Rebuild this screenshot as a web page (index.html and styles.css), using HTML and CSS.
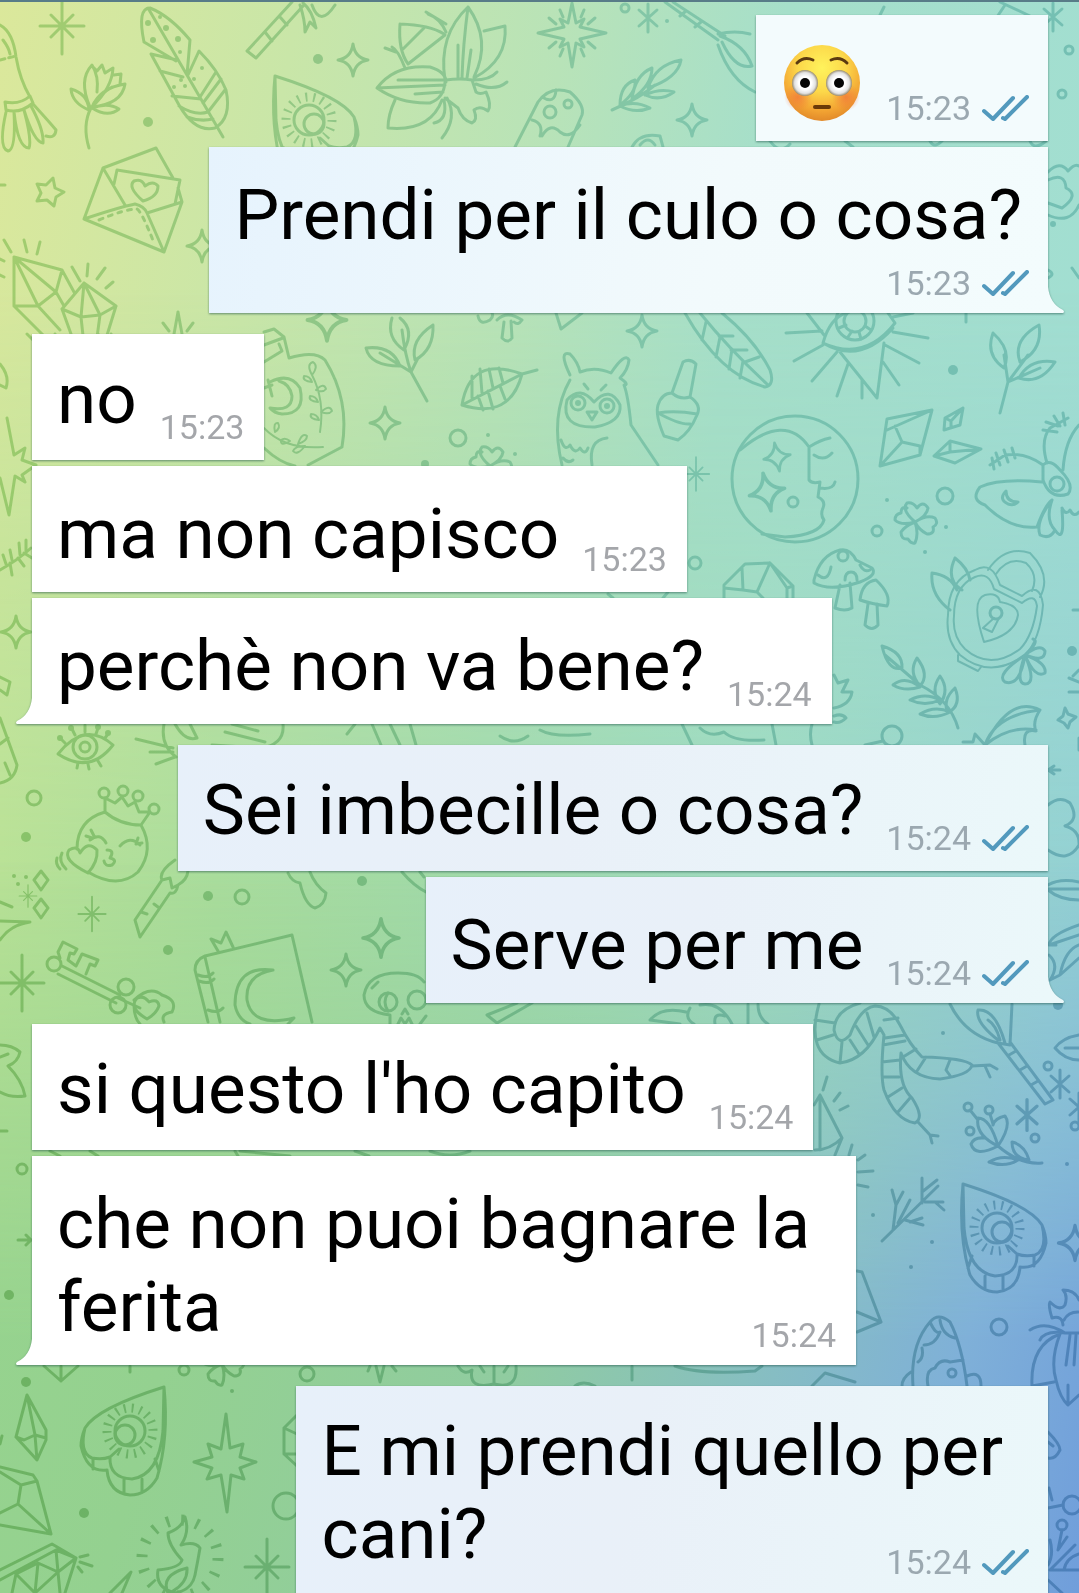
FILE: index.html
```html
<!DOCTYPE html>
<html lang="it">
<head>
<meta charset="utf-8">
<meta name="viewport" content="width=device-width, initial-scale=1">
<title>Chat</title>
<link rel="stylesheet" href="styles.css">
</head>
<body>
<svg class="defs" width="0" height="0" aria-hidden="true">
  <defs>
    <symbol id="read" viewBox="0 0 47 26"><path d="M2 16l9 8L31 3M21 23l2 1L45 2" fill="none" stroke="#5299bd" stroke-width="4" stroke-linecap="round" stroke-linejoin="round"/></symbol>
    <symbol id="tail" viewBox="0 0 16 26"><path d="M0 0Q2 17 15 23Q17 25 15 26H0Z" fill="currentColor"/></symbol>
  </defs>
</svg>

<div class="wallpaper" aria-hidden="true">
<svg class="doodles" viewBox="0 0 1079 1593" preserveAspectRatio="xMinYMin slice">
  <defs>
    <linearGradient id="ink" x1="0" y1="0" x2="1" y2="0">
      <stop offset="0" stop-color="#3c9a14"/><stop offset=".35" stop-color="#2c8c4a"/><stop offset=".6" stop-color="#2c947c"/><stop offset="1" stop-color="#1e867e"/>
    </linearGradient>
    <linearGradient id="inkLow" x1="0" y1="0" x2="1" y2="0">
      <stop offset="0" stop-color="#23780f"/><stop offset=".6" stop-color="#1c7450"/><stop offset="1" stop-color="#06427e"/>
    </linearGradient>
    <linearGradient id="down" x1="0" y1="0" x2="0" y2="1">
      <stop offset=".3" stop-color="#000"/><stop offset=".8" stop-color="#fff"/>
    </linearGradient>
    <mask id="lower" maskUnits="userSpaceOnUse" x="0" y="0" width="1079" height="1593"><rect width="1079" height="1593" fill="url(#down)"/></mask>
    <path id="spark" d="M0-16Q2-2 15 0Q2 2 0 16Q-2 2-15 0Q-2-2 0-16Z"/>
    <path id="burst" d="M0-28V28M-22 0H22M-11-11L11 11M11-11L-11 11"/>
    <path id="aster" d="M0-14V14M-9-8L9 8M9-8L-9 8"/>
    <path id="clover" d="M0 0Q-14-12-8-19Q-2-20 2-14Q8-22 13-14Q12-6 0 0Q12-8 20-4Q24 2 18 5Q20 12 12 12Q4 8 0 0Q4 12 0 21Q-4 22-7 17Q-14 18-14 10Q-10 4 0 0Q-14 4-20-2Q-20-8-14-9Q-14-16-8-14M0 0"/>
    <g id="planchette">
      <path d="M323 184Q390 205 402 225Q408 250 395 255Q385 257 377 254Q378 275 355 276Q328 272 324 228ZM323 184Q318 235 330 275Q340 292 357 292Q378 290 380 267Q400 270 406 243Q406 235 402 225M345 276v13M363 276v13M394 256v10M332 256l-4 12M377 254l-9-8"/>
      <circle cx="357" cy="228" r="15"/><circle cx="362" cy="232" r="10"/>
      <circle cx="357" cy="228" r="23" stroke-width="9" stroke-dasharray="2 6" stroke-linecap="butt"/>
    </g>
    <mask id="lines" maskUnits="userSpaceOnUse" x="0" y="0" width="1079" height="1593">
      <g fill="none" stroke="#fff" stroke-width="3" stroke-linecap="round" stroke-linejoin="round">
        <!-- top left: broom, tulip, feather -->
        <path d="M0 25Q13 32 16 57Q20 80 30 97M5 102Q20 105 30 96L33 103Q20 114 6 110ZM6 112Q-2 148 8 151Q16 150 14 112M14 112Q18 148 29 148Q32 140 24 110M24 110Q34 142 43 143Q44 130 31 106M33 104Q52 125 56 130Q55 139 46 136M3 40Q9 48 10 54"/>
        <path d="M0 60l16-4" stroke-dasharray="5 4"/>
        <path d="M89 148Q82 125 91 108Q100 94 112 87M90 107Q78 80 92 65Q99 76 97 92M92 66l5 5 5-6 3 8 8-5Q112 88 92 107M114 75l7-1-1 10M125 84Q122 104 92 107Q100 88 125 84ZM71 89Q72 103 89 110Q88 94 71 89ZM92 108Q108 102 119 109Q108 118 92 108Z"/>
        <path d="M144 42Q137 8 150 8Q170 16 190 40L187 75M144 42L176 61M148 8L223 137M151 54L179 105Q195 133 215 128Q232 118 226 90Q218 70 199 51L188 75M151 54L177 60M160 71L183 77M172 96L201 99M179 106Q195 116 208 112M187 117Q200 122 213 119M221 79L203 103M225 90L208 112M216 72L200 97"/>
        <path d="M247 51L292 2M256 58L303 6M247 51l9 7M265 32l7 9M280 17l7 8M300 5Q305 20 305 32L310 22L316 28Q312 10 303 3M312 5Q320 28 335 5"/>
        <use href="#burst" x="62" y="26"/><use href="#spark" x="353" y="60"/>
        <use href="#planchette" x="-48" y="-108"/>
        <!-- lily -->
        <path d="M445 80Q438 35 468 7Q492 40 474 77M468 7Q463 45 462 78M458 45v32M471 50L467 78M484 31L505 26Q508 60 474 78M400 24Q430 25 444 34M400 24Q398 50 408 64M402 50L424 28M408 64L445 35M377 88Q395 64 430 67Q446 72 446 82M377 88Q400 104 430 103Q444 98 445 82M377 88L445 85M398 80L443 80M415 94L443 92M395 100Q388 115 388 128Q430 132 442 100M446 80Q460 78 472 80L476 92Q480 95 486 92Q492 105 488 111Q480 105 474 110Q478 120 472 123Q462 120 458 108L445 98M474 80Q490 80 497 72M476 84Q495 92 507 82M444 100Q448 120 434 123M447 98Q458 118 442 138M426 12Q436 18 446 24M446 32Q440 18 428 14M385 48l11 4M405 68Q398 50 392 47"/>
        <!-- envelope, star, crystals -->
        <path d="M103 168L156 148L173 178M103 168L84 219L164 252L182 202L178 188M114 184L117 170L180 180L175 204M103 168L125 205M84 219Q120 207 135 204Q144 206 147 213L164 252M182 202L147 213M143 201Q127 187 134 181Q142 178 145 186Q153 180 158 186Q158 197 143 201Z"/>
        <path d="M99 220Q125 209 137 209Q142 212 154 243" stroke-dasharray="4 6"/>
        <path d="M53 178l2 10 9 4-8 5-2 9-7-6-10 1 4-8-4-9 9 1ZM0 185h5"/>
        <path d="M14 257V306L38 306L56 292L62 270ZM14 257L38 306M14 257L56 292M62 270L74 292M56 292L64 306M14 306L48 340M38 306L60 330M84 283L62 309L81 317L100 315L116 306ZM84 283L81 317M84 283L100 315M62 309L75 345M81 317L84 345M100 315L96 345M116 306L104 345M4 240l7 12M24 240l3 12M40 242l-3 12M72 267l8 14M88 264l-1 12M105 268l-8 11M113 282l-7 6M178 312l-4 22M178 312l4 22M163 323l6 8M193 323l-6 8M0 259l4 2M0 275l4 2"/>
        <use href="#spark" x="202" y="246"/><use href="#spark" transform="translate(327 320)scale(1.3)"/>
        <!-- top right -->
        <path d="M572 3l4 20 8-4-4 8 26 6-26 6 4 8-8-4-4 24-4-24-8 4 4-8-26-6 26-6-4-8 8 4Z"/>
        <path d="M560 10l3 7M584 10l-3 7M549 18l7 6M595 18l-7 6M549 48l7-6M595 48l-7-6M560 56l3-7M584 56l-3-7"/>
        <path d="M665 2L718 40M673 2L725 36M680 16l6-5M695 27l6-5M718 34Q735 30 750 34M722 42Q735 70 752 66M720 36Q745 45 752 66M718 45Q730 80 755 92M1005 5l-8 12M1000 2l30 14M880 15l4-8"/>
        <path d="M612 110Q640 98 655 85M620 105Q620 85 635 80Q637 92 620 105M632 99Q635 75 652 68Q652 85 632 99M648 88Q655 65 681 60Q678 78 648 88M645 95Q660 88 674 92Q660 102 645 95M620 106Q635 100 650 108Q635 114 620 106"/>
        <path d="M515 147L538 102Q550 85 570 92Q585 105 582 115L568 147M542 97Q555 105 556 90M542 136Q550 122 560 132Q570 140 580 125M532 120q12 3 8 16M632 147Q640 132 660 136L663 147M640 145Q648 135 655 145"/>
        <circle cx="550" cy="112" r="6"/><circle cx="568" cy="104" r="4"/><circle cx="625" cy="8" r="4"/>
        <use href="#aster" x="648" y="18"/><use href="#spark" x="692" y="120"/><use href="#aster" x="1053" y="17"/>
        <circle cx="1069" cy="50" r="4"/><circle cx="1062" cy="94" r="4"/>
        <path d="M1048 172Q1060 160 1068 171Q1075 163 1079 166M1048 180Q1065 172 1066 188Q1080 195 1062 208L1048 203M1048 215Q1070 225 1079 205M1048 270q8 4 0 8M1072 268l7 10M770 141q10 14 20 3M845 141l8 6M930 141q4 8 12 0M1030 141q4 10 16 0"/>
        <!-- second band: jar, twigs, leaf -->
        <path d="M264 332L274 329L284 337L289 358Q315 350 325 360Q350 400 342 447L308 465M264 448Q280 463 295 466M264 345L283 338M264 362L282 351L279 344M270 382Q290 372 300 388Q306 414 282 414Q274 413 270 408Q292 412 292 396Q290 384 279 381"/>
        <path d="M312 375Q325 400 320 432M264 428Q285 450 323 447M312 375Q306 364 313 362Q319 366 312 375M312 382q-10-1-8-6q6 0 8 6M316 390q8-8 10-1q-3 4-10 1M318 402q-10-1-8-6q6 0 8 6M321 412q9-8 11-1q-3 4-11 1M319 420q-10-1-8-6q6 0 8 6M275 432q-2-10 3-9q3 5-3 9M290 441q-10 6-9-1q4-3 9 1M298 444q4-12 9-8q0 5-9 8M305 446q-8 10-12 5q2-5 12-5" stroke-width="2"/>
        <path d="M264 388l8-3M268 380l4 16M427 401L411 372Q405 355 402 330M411 372L418 358M366 348Q370 366 400 366Q392 345 366 348ZM392 318Q386 338 404 350Q415 330 400 318M433 325Q410 340 415 360Q434 350 433 325ZM411 372L380 353"/>
        <path d="M462 405Q470 355 522 374Q510 420 462 405ZM462 405L522 374L537 370M472 398v-22M482 393l-2-24M493 388l-4-19M503 383l-4-15M478 396l5 14M488 391l5 18M500 386l5 13"/>
        <path d="M478 316q2 10 12 4q4-4 2-7M497 320q10-10 25 0q-4 6-8 2M504 322l-2 16q6 6 10 0l-1-17"/>
        <use href="#spark" x="385" y="423"/><circle cx="458" cy="438" r="8"/><use href="#clover" x="490" y="466"/>
        <path d="M7 418L14 455L25 448L22 460L36 465L22 475L25 482L15 476L9 515L0 478M0 364Q10 376 6 388L0 385M0 570Q18 560 31 548M6 564l-3-9M12 560l-2-10M20 555l-1-12M26 551l0-11M10 563l2 12M18 558l6 8M24 553l8 5M27 334l8 8M55 334l-4 20M98 334l-4 10M111 334l-4 10"/>
        <path d="M556 313L561 329L582 313M685 313Q720 375 765 387Q775 385 770 370Q755 340 722 313M700 313Q730 350 768 385M706 322l-4 18M720 337l-4 20M732 349l-3 20M743 361l-3 17M719 336h14M731 350h16M745 362l14-5"/>
        <use href="#spark" x="642" y="331"/>
        <path d="M823 343Q830 318 846 313M823 343Q865 362 895 323L888 313M823 343Q860 365 893 328M840 352L877 398L884 343M807 313L824 335M786 333L822 331M794 361L823 345M812 381L837 352M837 396L848 364M862 398V380M883 362l16 23M885 345l34 18M893 332l35 6M893 317l20-4M966 313v9"/>
        <circle cx="855" cy="321" r="19"/><circle cx="855" cy="321" r="11"/><path d="M839 328l7-3M848 337l4-6M861 339l-2-7M871 330l-6-4"/>
        <path d="M570 375Q558 350 570 354Q578 362 580 372Q595 366 611 373Q625 352 629 360Q628 370 620 378Q630 385 624 385Q628 395 631 425L658 465M570 380Q550 415 562 465M594 402Q580 385 567 400Q560 428 595 427Q622 422 620 405Q610 385 594 402ZM587 412h10l-5 8ZM584 384l4 5M606 385l-5 5M561 440q4 12 9 5q5 10 10 3q5 8 8 0M607 438Q588 440 592 465M563 458q5 6 10 2"/>
        <circle cx="578" cy="403" r="7"/><circle cx="607" cy="406" r="7"/>
        <path d="M683 362Q690 358 696 364L690 397Q702 405 697 415Q690 432 678 440L664 436Q655 415 658 405Q662 393 672 393ZM672 393Q680 400 690 397M658 413Q675 410 697 414M658 413Q680 425 690 424"/>
        <use href="#burst" transform="translate(696 474)scale(.6)"/>
        <circle cx="795" cy="479" r="63"/>
        <path d="M740 450Q785 412 809 447V480Q812 484 820 482L818 497Q826 501 823 508Q820 515 824 520Q820 535 785 537L762 534M814 455Q824 462 832 453M809 447Q820 440 830 438M820 488Q833 490 835 482"/>
        <use href="#spark" transform="translate(777 457)rotate(-10)scale(.9)"/><use href="#spark" transform="translate(767 492)rotate(-12)scale(1.2)"/><circle cx="793" cy="502" r="5"/>
        <path d="M887 419L932 410L920 455L880 466ZM887 430L932 410M895 426l7 16l18 4M902 442L880 466M920 446l0 9M945 418L963 408L960 425L944 430ZM945 418l6 3l0 6M951 421L963 408M934 456L950 441L981 449L955 463ZM934 456L950 452L981 449M950 441v11"/>
        <path d="M1000 413L1008 382L1028 355M1008 382L1004 355M1008 382L1040 368M993 333Q1012 350 1004 368Q985 355 993 333ZM1039 325Q1043 350 1020 362Q1012 340 1039 325ZM1055 362Q1040 385 1019 378Q1030 358 1055 362Z"/>
        <path d="M1043 465Q1050 458 1060 470Q1075 485 1068 494Q1050 500 1043 480ZM1042 482Q1000 478 980 487Q970 500 985 505Q1010 530 1037 527Q1045 505 1052 500M1043 465Q1025 452 1005 455L990 465M996 453l4 12M1004 450l4 12M1012 448l3 10M992 458l2 11M1047 463Q1040 440 1050 428L1068 418M1043 430l14 2M1046 422l12 4M1054 416l6 10M1063 413l2 12M1063 470Q1065 440 1079 425M1052 500Q1035 522 1040 535Q1050 540 1055 530Q1065 545 1062 510M1052 500Q1045 520 1055 530M1062 508q4 8 8 2q4 8 9 2M1006 491q-8 8 2 13q6 2 10-2q-12 0-12-11"/>
        <circle cx="1057" cy="484" r="7"/><use href="#clover" x="915" y="522"/><circle cx="945" cy="496" r="8"/><circle cx="877" cy="531" r="5"/><circle cx="695" cy="563" r="6"/>
        <path d="M814 580Q820 555 840 550Q850 548 856 560L872 568Q878 575 860 582Q830 592 814 583ZM840 585L835 608Q845 612 852 608L850 583M860 600Q862 582 876 580Q892 595 887 606Q872 604 860 600ZM868 604L865 625Q872 632 878 625L877 604M818 575q10 8 13-8M845 580q0-8 6-8q6 0 6 8M860 565q4 8 10 5"/><circle cx="843" cy="556" r="5"/>
        <path d="M724 600V585L745 564L770 563L793 586V598M742 568L743 590L757 592L770 563M724 588L743 590M757 592l6 6M770 563L787 588V598M787 588l6-2M608 594l5 4M668 592l-5 6"/>
        <!-- padlock -->
        <path d="M948 615Q948 580 975 570Q992 560 1000 585L1022 596Q1040 580 1043 605Q1040 640 1025 655Q990 680 960 655Q945 640 948 615ZM954 616Q954 586 975 577Q989 571 994 589L1022 603Q1035 592 1037 606Q1033 636 1020 649Q990 671 965 649Q952 636 954 616ZM988 570Q1005 545 1030 553Q1052 575 1040 597M996 574Q1008 556 1026 563Q1039 575 1032 591M984 642Q970 600 985 595Q998 592 1000 602Q1018 605 1018 615Q1015 635 984 642ZM994 618L983 628L992 632L999 618M958 655l0 6l20 10l3-4" stroke-width="2"/>
        <circle cx="996" cy="613" r="6"/>
        <path d="M932 573Q930 595 950 610M932 573Q950 575 957 590M955 558Q945 580 962 590M955 558Q968 568 970 580M1025 655q-30 20-20 27q15 5 20-27q-10 28 0 29q12 0 0-29q10 24 20 18q2-10-20-18q20 8 20-4q-5-8-20 4q15-14 8-16"/>
        <path d="M958 728Q950 700 920 685L885 655M882 646Q888 672 902 668Q903 652 882 646ZM917 658Q908 672 920 686Q930 675 917 658ZM940 676Q930 690 940 704Q950 690 940 676ZM955 688Q942 700 948 713Q962 705 955 688ZM893 685Q905 692 920 687Q905 675 893 685ZM910 700Q925 707 940 700Q925 692 910 700ZM920 714Q935 720 950 712Q935 705 920 714Z"/>
        <circle cx="892" cy="736" r="10"/>
        <path d="M883 741L865 745M963 742L973 742L975 734L985 745Q1010 695 1040 710Q1032 722 1036 731Q1022 728 1025 745M985 745Q1010 725 1036 730M985 745Q995 715 1040 710M1065 708l3 6l8 3l-6 5l-2 6l-4-5l-6-3l5-4ZM1079 610h-6M1079 670l-6 6M1079 682l-10-4M1079 692h-10M1079 750v-12M1048 770h12M1048 770l6-4M1048 770l6 4M834 675L838 683L848 680L842 692L852 692Q850 705 834 708M834 716q8-3 12 2q-6 6-12 4"/>
        <path d="M1048 805Q1060 795 1070 803Q1080 820 1065 826Q1080 830 1079 845Q1068 864 1048 850M1048 885Q1060 878 1079 882M1048 890Q1060 900 1079 900M1048 889H1079M1079 925Q1050 935 1049 945L1056 945M1049 955Q1060 965 1050 980M1079 945Q1065 950 1060 975L1050 980M1060 975L1079 958M1049 945L1079 935M682 724l10 21M772 724l4 21M700 728q10 10 24 4q10 10 40 8M812 724q-3 10 0 21"/>
        <!-- left middle -->
        <use href="#spark" x="16" y="632"/>
        <path d="M0 718L17 765Q15 780 0 783M0 744L8 738M5 763L10 775M0 677L10 682L7 695L0 690M58 754Q85 720 113 745Q90 775 58 754ZM65 743l-4-4M75 735l-3-6M85 732v-7M96 734l2-6M105 738l3-4M78 763l-1 5M88 764l1 5M98 761l3 5"/>
        <circle cx="85" cy="747" r="12"/><circle cx="85" cy="747" r="5"/>
        <path d="M164 724Q160 745 176 757M136 739L173 748M150 752h23M156 764L175 757M283 724Q285 745 260 748L212 745M175 724Q185 742 197 738L190 724M225 732L265 742M232 724L258 731M372 724l9 21M390 724l10 21M410 724l6 21M355 724l-8 10M500 736q14 10 28 0M540 730q14 8 50 4"/>
        <circle cx="34" cy="798" r="7"/><circle cx="242" cy="897" r="7"/>
        <path d="M77 849Q77 820 105 812M141 825Q155 850 138 872Q118 890 88 872M105 812V798L115 803L122 797L128 806L135 802L139 812L150 812L141 825Q120 825 105 812M90 840Q100 832 106 843M120 846Q130 835 140 845M86 836l6 2M91 830l3 6M138 838l-2 6M142 843l-6 1M107 850Q115 850 110 858Q118 860 112 865Q105 867 104 861M88 873Q62 860 69 850Q78 845 80 853Q88 840 97 850Q98 862 88 873ZM62 853q-4 8 4 16M57 858q-2 6 3 11"/>
        <circle cx="104" cy="793" r="5"/><circle cx="123" cy="791" r="5"/><circle cx="138" cy="796" r="5"/><circle cx="154" cy="809" r="5"/>
        <path d="M41 871l7 9-7 10-7-10ZM41 899l7 9-7 10-7-10ZM0 902l12 5M0 921L30 922Q10 925 0 940"/>
        <use href="#burst" transform="translate(28 896)scale(.4)"/><use href="#burst" transform="translate(92 914)scale(.62)"/>
        <path d="M140 937L135 920L162 880Q158 872 175 860M140 937L170 893Q176 895 178 885Q187 880 188 871M162 880l8-2l2 10l6-3M141 912l6 2M154 904l4 3M288 873Q292 882 300 883Q305 905 315 908Q325 905 326 893Q315 885 310 872M402 872q12 14 24 20M420 872l4 5"/>
        <use href="#spark" transform="translate(381 938)scale(1.2)"/><use href="#spark" x="346" y="970"/><use href="#burst" x="22" y="983"/>
        <circle cx="54" cy="964" r="7"/>
        <path d="M62 966L120 995M58 974L116 1003M60 958L58 952L63 942L77 949L74 954L70 953L68 960L76 966L82 954L98 960L95 966L90 964L86 974M118 998L140 1008"/>
        <circle cx="126" cy="987" r="8"/><circle cx="118" cy="1005" r="8"/><path d="M147 1019Q128 1008 137 998Q144 995 149 1002Q158 998 159 1006Q156 1014 147 1019ZM134 1000Q150 985 162 995Q178 1000 172 1012Q160 1014 164 1022M134 1005Q134 1018 140 1024"/>
        <path d="M208 1022L195 970Q195 960 205 956L292 935L312 1022M205 957L220 1022M198 975q10 4 15-2M199 981q10 4 15-2M208 1010q10 4 15-2M273 970Q235 965 235 1005Q238 1020 250 1024M273 970Q245 975 247 1000Q252 1028 294 1018L288 1024M218 951L211 939L221 943L226 932L233 947"/>
        <path d="M390 1024V1015Q364 1012 364 995Q368 973 398 973Q418 973 424 982M402 1014l3-5l3 5M398 1024l3-6l4 6l4-6l3 6M372 988l6-6M420 1024l6-8M487 1015l10 8l35-20M487 1015l30-12"/>
        <circle cx="388" cy="1002" r="9"/><circle cx="417" cy="1000" r="9"/><path d="M388 993q-6 9 0 18"/>
        <!-- right lower: snake, broom, berries -->
        <path d="M819 1004Q805 1055 840 1063Q865 1060 880 1028L884 1035Q880 1075 884 1090Q895 1120 915 1123Q925 1118 912 1098Q898 1085 901 1053Q910 1078 940 1079Q970 1075 972 1065Q965 1058 922 1057Q910 1045 900 1025Q890 1006 875 1006Q860 1008 850 1035Q838 1048 834 1030Q835 1010 860 1003M972 1066L990 1065L997 1069M985 1066L990 1077M918 1122L930 1135L938 1136M930 1135L932 1143M817 1040l16-5M840 1063l2-21M859 1054l-9-14M868 1045l-12-19M874 1037l-7-24M815 1020l20 3M883 1045l22-4M882 1062l18-2M883 1077l16 0M888 1097l14-9M898 1112l12-14M884 1020l14-2M905 1035l-20 3M916 1049l-13 8M926 1057l-9 14M950 1060l-4 10l5 7"/>
        <path d="M950 1004Q965 1035 998 1043L1010 1045L1012 1004M978 1010Q975 1022 998 1040M978 1010Q995 1008 1005 1043M988 1020q8 5 12 20M998 1043L1045 1104L1053 1100L1010 1042M1009 1055l7-4M1020 1070l7-4M1031 1085l7-4M1079 1035Q1062 1038 1055 1048Q1065 1060 1079 1060M1065 1048h14"/>
        <circle cx="1048" cy="1066" r="4"/><circle cx="1035" cy="1138" r="4"/><circle cx="1075" cy="1126" r="4"/><use href="#aster" x="1060" y="1084"/><use href="#aster" transform="translate(1027 1115)scale(1.1)"/><use href="#aster" x="1079" y="1107"/>
        <circle cx="968" cy="1107" r="4"/><circle cx="989" cy="1110" r="4"/><circle cx="970" cy="1131" r="4"/>
        <path d="M998 1146Q975 1135 978 1118Q990 1118 998 1146Q1012 1125 1005 1116Q995 1118 993 1125M998 1146Q975 1158 971 1144Q974 1137 984 1138M970 1110l8 10M990 1114l3 10M998 1146Q1020 1165 1042 1163M1012 1142Q1025 1145 1029 1160Q1012 1158 1012 1142ZM989 1162Q1002 1154 1018 1160Q1005 1168 989 1162Z"/>
        <path d="M820 1095L814 1105M820 1095L842 1138L835 1155M820 1095V1150M815 1150Q830 1150 842 1138M827 1077l-4 13M840 1093l-6 8M848 1106l-8 4M858 1172l15-1M858 1185l10 2M852 1145l-3 10M865 1155l-7 5M650 1020q12-14 36-8M650 1020l30 4M690 1008q-6 10 4 16M700 1005q20-4 32 19M715 1024q-2-12 10-8M748 1004v20M758 1004q0 14 10 20"/>
        <path d="M882 1241L938 1186M893 1230L896 1205L892 1190M896 1205L903 1192M898 1223l12-23M922 1203V1178M922 1192L937 1180M925 1202h18M935 1202l9 8M905 1220l18 5M910 1222l12-4"/>
        <use href="#planchette" x="640" y="1000"/>
        <use href="#spark" transform="translate(1075 1243)scale(1.1)"/><circle cx="999" cy="1327" r="8"/>
        <path d="M857 1271L862 1272L881 1322L857 1332M857 1312L881 1322M913 1386Q910 1345 930 1322Q938 1312 950 1322Q962 1345 967 1386M928 1386Q925 1370 935 1368Q940 1358 950 1362L963 1360M940 1320Q942 1335 955 1338M930 1322Q936 1335 940 1332Q935 1345 924 1345M918 1362q6-4 4-14M902 1386q0-8 9-14M967 1376q14-6 14 10"/><circle cx="952" cy="1373" r="4"/>
        <path d="M1065 1333Q1045 1320 1030 1330M1065 1333Q1045 1330 1040 1340M1065 1333H1079M1060 1334Q1030 1345 1032 1386L1054 1382M1060 1334Q1050 1360 1056 1380Q1060 1398 1068 1405L1079 1395M1070 1335L1066 1365M1076 1335L1074 1365M1068 1405V1385M1063 1325Q1062 1315 1052 1318Q1048 1305 1050 1302Q1060 1312 1065 1305Q1068 1295 1063 1290Q1075 1290 1079 1300M1064 1320q4-8 14-8M675 1366Q700 1375 755 1371L762 1366M812 1386L825 1373L855 1382M575 1386q8-6 20 0M632 1366v14"/>
        <path d="M1048 1432Q1060 1444 1060 1450Q1055 1460 1048 1458M1048 1442l5 4M1049 1488l3 12M1048 1508L1063 1505M1062 1530L1058 1550L1067 1537M1050 1570L1075 1545M1050 1570H1079M1050 1540q4 15-2 25M1064 1570q2-12 15-16M1048 1580l14 13"/>
        <circle cx="1072" cy="1505" r="9"/><circle cx="1062" cy="1525" r="5"/>
        <!-- bottom left -->
        <path d="M0 1045Q12 1045 20 1052Q18 1062 8 1066Q22 1080 25 1096Q10 1098 0 1092M0 1057l8-3M0 1131h7M18 1240h14M26 1235l5 5l-5 5M50 1151l10 5M90 1151l8 5M235 1151l3 5M240 1151l50 5M355 1151l14 5M430 1151q20 8 40 0"/>
        <circle cx="22" cy="1169" r="5"/><circle cx="184" cy="1370" r="5"/><circle cx="307" cy="1374" r="7"/><circle cx="286" cy="1506" r="13"/>
        <path d="M44 1366L61 1381L78 1366M61 1366V1381M130 1366v6M27 1395L46 1430V1440L37 1460L16 1437ZM27 1395L35 1435L46 1438M16 1437L24 1440L35 1435L37 1460M376 1366l4 16l4-16M370 1366l-2 5M392 1366l4 5M458 1366q6 10 14 4q-4 20 22 14q24 6 22-18M484 1372l-4-6M504 1372l4-6M494 1384v-18"/>
        <use href="#clover" x="222" y="1364"/><use href="#planchette" transform="translate(487 1203)scale(-1 1)"/>
        <path d="M226 1414L230 1448L243 1444L240 1457L256 1462L240 1468L244 1479L231 1475L227 1512L221 1475L207 1479L212 1468L194 1462L212 1457L208 1444L221 1449Z"/>
        <path d="M0 1467L33 1475L37 1481L51 1534L0 1525M21 1485L37 1481M21 1485L18 1504L51 1534M18 1504L0 1513M21 1485L0 1472M0 1444l2-8M297 1415L284 1428V1454L297 1466M284 1428l13 6M284 1454h13"/>
        <path d="M185 1517Q190 1532 181 1545Q195 1541 200 1548Q198 1560 195 1575Q192 1590 175 1593Q155 1588 158 1570Q180 1568 182 1560Q168 1545 168 1533Q182 1528 185 1517ZM187 1568Q160 1575 168 1593M187 1568Q188 1582 173 1591"/>
        <circle cx="180" cy="1558" r="38" stroke-width="11" stroke-dasharray="3 12" stroke-linecap="butt"/>
        <use href="#burst" x="267" y="1567"/>
        <path d="M0 1570L52 1544L76 1558L65 1593M0 1580L56 1550L76 1558L58 1572L35 1593L16 1574L38 1563L58 1572L60 1593M38 1563L35 1593M16 1574L12 1593M56 1550L58 1572M80 1557l8-2M80 1562l12 4M78 1567l4 5M110 1593L131 1572L122 1593"/>
        <g fill="#fff" stroke="none">
          <circle cx="148" cy="122" r="5"/><circle cx="318" cy="59" r="5"/><circle cx="148" cy="23" r="3"/><circle cx="160" cy="17" r="2"/><circle cx="166" cy="28" r="3"/><circle cx="153" cy="40" r="3"/><circle cx="178" cy="39" r="3"/><circle cx="180" cy="52" r="2"/><circle cx="202" cy="68" r="2"/><circle cx="194" cy="79" r="2"/><circle cx="181" cy="80" r="2"/><circle cx="174" cy="87" r="2"/><circle cx="185" cy="86" r="2"/>
          <circle cx="667" cy="21" r="2"/><circle cx="1053" cy="224" r="3"/><circle cx="488" cy="435" r="2"/><circle cx="515" cy="454" r="2"/><circle cx="425" cy="464" r="4"/><circle cx="578" cy="403" r="3"/><circle cx="607" cy="406" r="3"/><circle cx="953" cy="370" r="5"/><circle cx="887" cy="500" r="2"/><circle cx="946" cy="527" r="2"/><circle cx="925" cy="552" r="2"/><circle cx="1072" cy="651" r="5"/>
          <circle cx="60" cy="738" r="3"/><circle cx="71" cy="728" r="3"/><circle cx="98" cy="727" r="3"/><circle cx="108" cy="733" r="3"/><circle cx="26" cy="837" r="5"/><circle cx="14" cy="876" r="2"/><circle cx="26" cy="877" r="2"/><circle cx="18" cy="884" r="2"/><circle cx="208" cy="896" r="5"/><circle cx="362" cy="881" r="5"/><circle cx="168" cy="950" r="5"/>
          <circle cx="943" cy="1033" r="2"/><circle cx="1058" cy="1005" r="5"/><circle cx="1067" cy="1164" r="2"/><circle cx="873" cy="1215" r="2"/><circle cx="932" cy="1242" r="2"/><circle cx="911" cy="1267" r="2"/><circle cx="9" cy="1295" r="5"/><circle cx="26" cy="1382" r="5"/><circle cx="232" cy="1391" r="2"/><circle cx="84" cy="1513" r="5"/>
        </g>
      </g>
    </mask>
  </defs>
  <g mask="url(#lines)" opacity=".34">
    <rect width="1079" height="1593" fill="url(#ink)"/>
    <rect width="1079" height="1593" fill="url(#inkLow)" mask="url(#lower)"/>
  </g>
</svg>
</div>

<main class="chat">
  <section class="group sent">
    <article class="bubble bright">
      <p class="text"><svg class="emoji" viewBox="0 0 76 76" role="img" aria-label="😳">
        <defs>
          <radialGradient id="skin" cx=".5" cy=".3" r=".7"><stop offset="0" stop-color="#fff35c"/><stop offset=".45" stop-color="#fcd84a"/><stop offset=".8" stop-color="#f3a533"/><stop offset="1" stop-color="#e28a2a"/></radialGradient>
          <radialGradient id="blush"><stop offset="0" stop-color="#f0703a" stop-opacity=".7"/><stop offset="1" stop-color="#f0703a" stop-opacity="0"/></radialGradient>
          <radialGradient id="eyeball"><stop offset=".5" stop-color="#fff"/><stop offset=".8" stop-color="#e2e2e2"/><stop offset="1" stop-color="#988c70"/></radialGradient>
        </defs>
        <circle cx="38" cy="38" r="38" fill="url(#skin)"/>
        <circle cx="14" cy="52" r="14" fill="url(#blush)"/><circle cx="62" cy="52" r="14" fill="url(#blush)"/>
        <circle cx="21" cy="38" r="13" fill="url(#eyeball)"/><circle cx="55" cy="38" r="13" fill="url(#eyeball)"/>
        <circle cx="21" cy="38" r="5" fill="#060606"/><circle cx="55" cy="38" r="5" fill="#060606"/>
        <path d="M13 18Q20 11 29 15M47 15Q56 11 63 18" fill="none" stroke="#5c3a10" stroke-width="3" stroke-linecap="round"/>
        <path d="M31 62h14" stroke="#6a3a08" stroke-width="4" stroke-linecap="round"/>
      </svg></p>
      <p class="meta"><time>15:23</time><svg class="check" role="img" aria-label="Letto"><use href="#read"/></svg></p>
    </article>
    <article class="bubble bright stacked last">
      <p class="text">Prendi per il culo o cosa?</p>
      <p class="meta"><time>15:23</time><svg class="check" role="img" aria-label="Letto"><use href="#read"/></svg></p>
      <svg class="tail" aria-hidden="true"><use href="#tail"/></svg>
    </article>
  </section>

  <section class="group received">
    <article class="bubble first">
      <p class="text">no</p>
      <p class="meta"><time>15:23</time></p>
    </article>
    <article class="bubble">
      <p class="text">ma non capisco</p>
      <p class="meta"><time>15:23</time></p>
    </article>
    <article class="bubble last">
      <p class="text">perchè non va bene?</p>
      <p class="meta"><time>15:24</time></p>
      <svg class="tail" aria-hidden="true"><use href="#tail"/></svg>
    </article>
  </section>

  <section class="group sent">
    <article class="bubble first">
      <p class="text">Sei imbecille o cosa?</p>
      <p class="meta"><time>15:24</time><svg class="check" role="img" aria-label="Letto"><use href="#read"/></svg></p>
    </article>
    <article class="bubble last">
      <p class="text">Serve per me</p>
      <p class="meta"><time>15:24</time><svg class="check" role="img" aria-label="Letto"><use href="#read"/></svg></p>
      <svg class="tail" aria-hidden="true"><use href="#tail"/></svg>
    </article>
  </section>

  <section class="group received">
    <article class="bubble first">
      <p class="text">si questo l'ho capito</p>
      <p class="meta"><time>15:24</time></p>
    </article>
    <article class="bubble multiline last">
      <p class="text">che non puoi bagnare la<br>ferita</p>
      <p class="meta"><time>15:24</time></p>
      <svg class="tail" aria-hidden="true"><use href="#tail"/></svg>
    </article>
  </section>

  <section class="group sent">
    <article class="bubble multiline first">
      <p class="text">E mi prendi quello per<br>cani?</p>
      <p class="meta"><time>15:24</time><svg class="check" role="img" aria-label="Letto"><use href="#read"/></svg></p>
    </article>
  </section>
</main>
</body>
</html>
```
FILE: styles.css
```css
* { box-sizing: border-box; }

body {
  margin: 0;
  font-family: Roboto, "Noto Sans", sans-serif;
  color: #000;
}

p { margin: 0; }

.defs { position: absolute; }

/* Wallpaper: three horizontal colour rows blended down the page */
.wallpaper {
  position: fixed;
  inset: 0;
  z-index: -1;
  overflow: hidden;
  background: linear-gradient(100deg, #dbe89b 0%, #c9e6a8 22%, #b8e3b8 42%, #a6dfca 58%, #9fded6 100%);
}

.wallpaper::before,
.wallpaper::after {
  content: "";
  position: absolute;
  inset: 0;
}

.wallpaper::before {
  background: linear-gradient(to right, #b8e196 0%, #a9dc9c 20%, #a0d9ab 45%, #9edabf 70%, #93d0d3 100%);
  mask-image: linear-gradient(to bottom, transparent 18%, #000 56%);
}

.wallpaper::after {
  background: linear-gradient(105deg, #9ad68b 0%, #94d190 35%, #90cca0 58%, #87bfc0 74%, #7fb0d8 88%, #709edb 100%);
  mask-image: linear-gradient(to bottom, transparent 54%, #000 84%);
}

.doodles {
  position: absolute;
  z-index: 1;
  width: 100%;
  height: 100%;
}

.chat {
  display: flex;
  flex-direction: column;
  gap: 21px;
  height: 100vh;
  padding: 13px 31px 0 32px;
  border-top: 2px solid #587c88;
  overflow: hidden auto;
  scrollbar-width: none;
}

.group {
  display: flex;
  flex-direction: column;
  flex-shrink: 0;
  gap: 6px;
}

.sent { align-items: flex-end; }
.received { align-items: flex-start; }

.bubble {
  position: relative;
  display: flex;
  gap: 23px;
  padding: 0 20px 0 25px;
  background: #fff;
  filter: drop-shadow(0 1px 1px rgba(30, 80, 70, 0.6));
}

.sent .bubble {
  padding-right: 19px;
  background: linear-gradient(100deg, #e7f0fa 0%, #e9f0f8 45%, #ebf8fa 100%);
}

.sent .bright { background: linear-gradient(100deg, #e6f3fd 0%, #f2fafc 60%, #f3fcfd 100%); }
.sent .bright:not(.stacked) { background: #f3fbfd; }

.text {
  padding: 26px 0 17px;
  font-size: 71px;
  line-height: 83px;
}

.first .text { padding: 23px 0 20px; }

.meta {
  display: flex;
  align-items: center;
  align-self: flex-end;
  gap: 11px;
  padding-bottom: 13px;
  font-size: 34px;
  line-height: 40px;
  color: #a4a6aa;
}

.sent .meta { color: #9ba8b0; }
.last .meta { padding-bottom: 10px; }

.stacked {
  flex-direction: column;
  gap: 0;
}

.stacked .text { padding: 26px 7px 7px 0; }

/* The time shares the box of a message that runs over several lines */
.multiline { display: grid; }

.multiline .text,
.multiline .meta { grid-area: 1 / 1; }

.multiline .text { padding-right: 26px; }
.multiline .meta { justify-self: end; }

.check {
  width: 47px;
  height: 26px;
}

.emoji {
  display: block;
  width: 76px;
  height: 76px;
  margin: 4px 3px 3px;
}

.tail {
  position: absolute;
  bottom: 0;
  width: 16px;
  height: 26px;
}

.sent .tail {
  left: 100%;
  color: #ebf8fa;
}

.sent .bright .tail { color: #f3fcfd; }

.received .tail {
  right: 100%;
  color: #fff;
  transform: scaleX(-1);
}
```
